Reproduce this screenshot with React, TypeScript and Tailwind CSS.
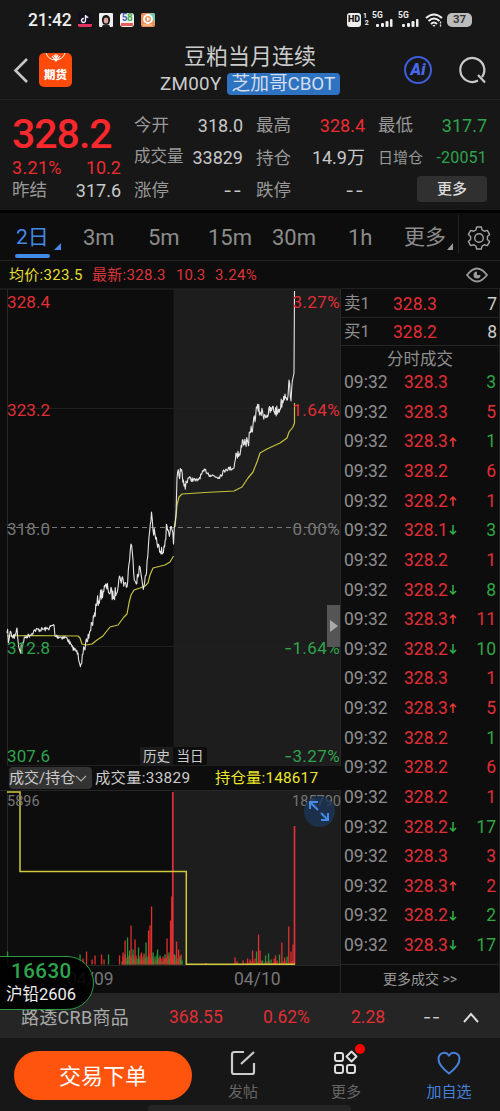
import clsx from 'clsx';

type Point = [number, number];

const trades: [string, string, number, string][] = [
    ['328.3', '', 3, 'g'],
    ['328.3', '', 5, 'r'],
    ['328.3', 'up', 1, 'g'],
    ['328.2', '', 6, 'r'],
    ['328.2', 'up', 1, 'r'],
    ['328.1', 'down', 3, 'g'],
    ['328.2', '', 1, 'r'],
    ['328.2', 'down', 8, 'g'],
    ['328.3', 'up', 11, 'r'],
    ['328.2', 'down', 10, 'g'],
    ['328.3', '', 1, 'r'],
    ['328.3', 'up', 5, 'r'],
    ['328.2', '', 1, 'g'],
    ['328.2', '', 6, 'r'],
    ['328.2', '', 1, 'r'],
    ['328.2', 'down', 17, 'g'],
    ['328.3', '', 3, 'r'],
    ['328.3', 'up', 2, 'r'],
    ['328.2', 'down', 2, 'g'],
    ['328.3', 'down', 17, 'g'],
];

const pricePoints: Point[] = [
    [7, 633], [9, 640], [11, 632], [13, 638], [15, 634], [17, 628], [18, 641], [20, 651], [23, 643], [25, 637], [30, 635], [35, 630],
    [47, 629], [54, 625], [55, 636], [67, 638], [72, 647], [78, 653], [81, 664], [83, 654], [85, 650], [87, 642],
    [90, 631], [92, 623], [94, 617], [97, 603], [100, 597], [105, 587], [108, 589], [114, 597], [120, 577], [125, 583],
    [127, 587], [129, 564], [131, 544], [133, 560], [135, 581], [138, 577], [140, 567], [142, 580], [144, 586], [146.5, 573], [149, 537],
    [151.5, 512], [153, 530], [157, 543], [161, 554], [164, 546], [167, 526], [170, 533], [172, 530], [173.5, 544],
    [175, 523], [176, 515], [177, 478], [181, 471], [184, 486], [188, 478], [197, 481], [205, 470], [210, 475],
    [219, 477], [226, 469], [234, 468], [236, 453], [240, 455], [243, 440], [248, 443], [253, 425], [257, 408],
    [260, 412], [267, 415], [272, 409], [278, 412], [285, 394], [288, 396], [289, 380], [291, 401], [293, 378], [294, 373], [294.5, 291],
];

const avgLeft: Point[] = [
    [7, 636], [30, 635.5], [78, 636], [80, 638], [82, 644], [86, 645], [92, 644], [97, 640], [103, 636], [106, 632], [110, 627],
    [118, 625], [124, 617], [127, 614], [129, 603], [131, 595], [134, 590], [140, 588], [145, 586], [148, 583], [150, 575],
    [153, 568], [165, 565], [170, 562], [173.5, 556],
];

const avgRight: Point[] = [
    [175, 527], [177, 505], [179, 497], [182, 494], [205, 492.5], [234, 491], [242, 487], [248, 478], [253, 472],
    [257, 462], [260, 453], [267, 449], [280, 443], [287, 438], [289, 432], [293, 427], [294.5, 423], [294.5, 403],
];

// x, height, colour
const volumeBars: [number, number, string][] = [
    [7.5, 13, 'g'], [80, 10, 'g'], [83, 6, 'r'], [86.5, 13, 'r'], [92, 5, 'r'], [95, 9, 'r'], [101.5, 10, 'r'],
    [104, 5, 'r'], [108.5, 10, 'g'], [119.5, 9, 'r'], [123, 12, 'r'], [125, 24, 'r'], [127.5, 27, 'g'], [129.5, 14, 'g'],
    [131, 39, 'r'], [133, 15, 'g'], [135, 25, 'r'], [138.5, 17, 'g'], [141.5, 12, 'r'], [144, 11, 'r'], [146, 22, 'g'],
    [148.5, 34, 'r'], [150, 39, 'r'], [151.5, 58, 'r'], [153, 12, 'g'], [157.5, 15, 'g'], [160, 7, 'r'], [164, 6, 'r'],
    [167, 26, 'r'], [169, 12, 'g'], [170.5, 44, 'r'], [171.7, 68, 'r'], [174.5, 10, 'g'], [176.5, 23, 'r'],
    [178.5, 15, 'r'], [180.5, 8, 'g'], [182, 4, 'g'], [206, 1.5, 'r'], [235, 7, 'r'], [237, 3, 'r'], [243, 4, 'r'],
    [247.5, 6, 'r'], [250, 5, 'r'], [252.5, 14, 'r'], [255, 6, 'r'], [256.5, 13, 'g'], [258.5, 30, 'r'], [260, 14, 'r'],
    [262.5, 4, 'g'], [265.5, 9, 'g'], [268.5, 11, 'g'], [271, 5, 'g'], [274, 6, 'r'], [275.5, 9, 'r'], [279.5, 10, 'g'],
    [281.8, 22, 'r'], [284.5, 7, 'r'], [287, 8, 'g'], [288.7, 38, 'r'], [291, 13, 'r'], [293, 20, 'r'],
];

const toPoints = (pts: Point[]) => pts.map((p) => p.join(',')).join(' ');

// small repeatable ticks between the main price points
function withTicks(pts: Point[]) {
    const out: Point[] = [];
    let seed = 7;
    pts.forEach(([x, y], i) => {
        out.push([x, y]);
        const next = pts[i + 1];
        if (!next || x > 293) return;
        const steps = Math.floor((next[0] - x) / 0.6);
        const calm = (x > 20 && x < 78) || (x > 185 && x < 235);
        for (let s = 1; s < steps; s++) {
            seed = (seed * 16807) % 2147483647;
            const amp = calm ? 4.5 : 12;
            out.push([x + ((next[0] - x) * s) / steps, y + ((next[1] - y) * s) / steps + (seed / 2147483647 - 0.5) * amp]);
        }
    });
    return out;
}

// low activity that fills the space under the tall bars
const fillBars: [number, number, string][] = Array.from({ length: 60 }, (_, i) => [
    122 + i,
    3 + ((i * 37) % 8),
    (i * 7) % 5 < 2 ? 'g' : 'r',
]);
const lowBars: [number, number, string][] = Array.from({ length: 24 }, (_, i) => [247 + i * 2, 1 + ((i * 5) % 4), 'r']);

function Bars({ data }: { data: [number, number, string][] }) {
    return (
        <>
            {data.map(([x, h, c], i) => (
                <rect key={i} x={x - 0.6} y={964.5 - h} width="1.3" height={h} fill={c === 'g' ? '#2b9438' : '#e0302e'} />
            ))}
        </>
    );
}

function Signal() {
    return (
        <div className="relative h-4 w-[21px]">
            <span className="absolute -top-[1px] left-0 text-[8.5px] leading-[9px] font-bold">5G</span>
            <svg className="absolute inset-0" width="21" height="16" fill="#eee">
                <rect x="4" y="12" width="3" height="3" rx="1" />
                <rect x="9" y="11" width="3" height="4" rx="1" />
                <rect x="13.5" y="9" width="3" height="6" rx="1" />
                <rect x="18" y="7" width="2.5" height="8" rx="1" />
            </svg>
        </div>
    );
}

function StatusBar() {
    return (
        <div className="flex h-10 items-center pl-7 text-[#eee]">
            <span className="w-[50px] text-[17.5px] font-medium tracking-[-0.2px]">21:42</span>
            <div className="flex gap-[7px]">
                <svg width="14" height="14">
                    <rect width="14" height="14" rx="2" fill="#15101b" />
                    <path d="M7.5 2v5.5a2 2 0 1 1-1.6-2M7.5 2.3c.5 1.4 1.4 2 2.8 2.2" fill="none" stroke="#eef" strokeWidth="1.4" />
                    <path d="M0 11h14v1.5q0 1.5-2 1.5H2q-2 0-2-1.5z" fill="#e33260" />
                </svg>
                <svg width="14" height="14">
                    <rect width="14" height="14" rx="1" fill="#eee" />
                    <path d="M3 8c-1-8 9-8 8 0l-1 3H4z" fill="#171717" />
                    <ellipse cx="7" cy="7.5" rx="2.3" ry="3" fill="#dca59a" />
                    <path d="M3 14c0-4 8-4 8 0z" fill="#222" />
                </svg>
                <div className="h-[14px] w-[14px] overflow-hidden rounded-[3px] bg-[#f5f5f2] text-center text-[10px] leading-[10px] font-bold tracking-[-0.5px]">
                    <span className="text-[#3567c7]">5</span>
                    <span className="text-[#49a842]">8</span>
                    <div className="mx-px h-[3px] bg-[#e95c59]" />
                </div>
                <svg width="14" height="14">
                    <rect width="14" height="14" rx="2" fill="#ec915b" />
                    <path d="M8 0h4q2 0 2 2v8z" fill="#75c8b1" />
                    <circle cx="7" cy="6" r="4" fill="#e99e6b" stroke="#fff" strokeWidth="1.8" />
                    <path d="M6 4l3 2-3 2z" fill="#fff" />
                    <path d="M2 12h9" stroke="#ffd0a4" />
                </svg>
            </div>
            <div className="ml-auto flex items-center pr-[28px]">
                <span className="flex h-[14px] w-[14px] items-center justify-center rounded-[3px] bg-[#eee] text-[9px] font-black text-[#171717]">HD</span>
                <span className="ml-[2px] w-[9px] text-[7px] leading-[7px] font-bold">1<br />&nbsp;2</span>
                <Signal />
                <div className="w-[5px]" />
                <Signal />
                <svg className="ml-[6px]" width="18" height="15" viewBox="0 0 18 15" fill="none" stroke="#eee" strokeWidth="2">
                    <path d="M1 5q8-7 16 0M3.5 8q5.5-5 11 0M6 11q3-3 6 0" />
                    <path d="M7.5 12h3L9 14z" fill="#eee" stroke="none" />
                    <path d="M15.5 8v6" stroke="#171717" strokeWidth="3" />
                    <path d="M15.5 8.5v6" strokeWidth="1.3" strokeDasharray="2 1" />
                </svg>
                <span className="ml-1 flex h-[14px] w-[25px] items-center justify-center rounded-[5px] bg-[#bdbdbd] text-[11.5px] font-semibold text-[#333]">37</span>
            </div>
        </div>
    );
}

function Header() {
    return (
        <header className="relative flex h-[60px] items-center border-b border-[#222]">
            <svg className="ml-[12px]" width="18" height="28" fill="none" stroke="#c6c6c6" strokeWidth="2.6">
                <path d="M15 3L3.500 14.500 15 26" />
            </svg>
            <div className="relative ml-[9px] h-[34px] w-[33px] overflow-hidden rounded-[5px] bg-[#fe4b0b] text-white">
                <svg width="33" height="17" fill="none" stroke="#fff" strokeWidth="1">
                    <path d="M7 0a10 10 0 0 0 19 0" />
                    <path d="M13 3l4 5 4-5M15 2l2 4 2-4M17 1v7" strokeWidth="1.2" />
                </svg>
                <span className="absolute top-[15px] left-[5px] text-[11.500px] leading-[14px] font-black">期货</span>
            </div>
            <div className="absolute top-0 left-[140px] flex h-full w-[220px] flex-col items-center text-[#ccc]">
                <h1 className="mt-[3px] text-[22px] leading-[28px]">豆粕当月连续</h1>
                <div className="mt-[2px] flex items-center gap-[5px] text-[18.8px] leading-[22px]">
                    <span className="tracking-[0.3px]">ZM00Y</span>
                    <span className="rounded bg-[#2e72c2] px-[5px] tracking-[-0.1px] whitespace-nowrap text-[#d3ddeb]">芝加哥CBOT</span>
                </div>
            </div>
            <span className="ml-auto flex h-7 w-7 items-center justify-center rounded-full border-2 border-[#3e5ddd] text-[16px] font-black text-[#4669f0] italic">Ai</span>
            <svg className="mr-[12px] ml-[26px]" width="30" height="30" fill="none" stroke="#c9c9c9" strokeWidth="2.2">
                <path d="M20 25.500A12 12 0 1 1 24 22M20 20l7 7.500" />
            </svg>
        </header>
    );
}

function Stat({ label, value, tone = 'text-[#c8c8c8]', small }: { label: string; value: string; tone?: string; small?: boolean }) {
    return (
        <div className="flex h-[32.5px] items-center justify-between whitespace-nowrap">
            <span className={clsx('text-[#999]', small ? 'text-[15px]' : label.length > 2 ? 'text-[16.5px]' : 'text-[17.5px]')}>{label}</span>
            <span className={clsx(tone, small ? 'text-[16px] tracking-[0.2px]' : 'text-[18px]', value === '--' && "font-[Inter] tracking-[1.5px]")}>{value}</span>
        </div>
    );
}

function Quote() {
    return (
        <section className="flex h-[113px] gap-[13px] border-b-[3px] border-black pt-[9px] pr-[13px] pl-3">
            <div className="w-[109px]">
                <div className="h-[50px] text-[41px] leading-[51px] font-medium tracking-[-1px] text-[#f9282c]">328.2</div>
                <div className="flex h-[16px] items-center justify-between text-[18px] text-[#ed2b31]">
                    <span className="tracking-[0.3px]">3.21%</span>
                    <span>10.2</span>
                </div>
                <div className="-mt-[1px]">
                    <Stat label="昨结" value="317.6" />
                </div>
            </div>
            <div className="w-[109px]">
                <Stat label="今开" value="318.0" />
                <Stat label="成交量" value="33829" />
                <Stat label="涨停" value="--" />
            </div>
            <div className="w-[109px]">
                <Stat label="最高" value="328.4" tone="text-[#ed2b31]" />
                <Stat label="持仓" value="14.9万" />
                <Stat label="跌停" value="--" />
            </div>
            <div className="w-[109px]">
                <Stat label="最低" value="317.7" tone="text-[#2fa44d]" />
                <Stat label="日增仓" value="-20051" tone="text-[#2fa44d]" small />
                <button className="mt-[2px] ml-[39px] block h-[26px] w-[70px] rounded-[4px] bg-[#303030] text-[15px] font-medium text-[#ddd]">更多</button>
            </div>
        </section>
    );
}

function Tabs() {
    return (
        <nav className="flex h-[48px] items-center border-b border-[#252525] pt-[2px] text-[22px] text-[#8c8c8c]">
            <div className="relative ml-[15px] w-[68px] text-[21px] text-[#4389e8]">
                <span className="ml-px">2日</span>
                <i className="absolute top-[32px] left-0 h-1 w-[35px] rounded-full bg-[#4389e8]" />
                <svg className="absolute top-[21px] left-[39px]" width="7" height="7">
                    <path d="M7 0v7H0z" fill="#4389e8" />
                </svg>
            </div>
            <span className="w-[65px]">3m</span>
            <span className="w-[60px]">5m</span>
            <span className="w-[64px]">15m</span>
            <span className="w-[76px]">30m</span>
            <span className="w-[56px]">1h</span>
            <div className="relative w-[54px] text-[21px]">
                更多
                <svg className="absolute top-[21px] left-[43px]" width="6" height="7">
                    <path d="M6 0v7H0z" fill="#999" />
                </svg>
            </div>
            <i className="h-[38px] w-px self-start bg-[#222]" />
            <svg className="ml-[8px]" width="24" height="24" viewBox="0 0 24 24" fill="none" stroke="#a3a3a3" strokeWidth="1.4" strokeLinejoin="round">
                <path d="M9.700 1h4.600l.8 3 2.200 1.200 3-.8 2.300 4-2.200 2.200v2.800l2.200 2.200-2.300 4-3-.8-2.200 1.200-.8 3H9.700l-.8-3-2.200-1.200-3 .8-2.300-4 2.200-2.200v-2.800L1.400 8.400l2.300-4 3 .8L8.900 4z" />
                <circle cx="12" cy="12" r="4.300" />
            </svg>
        </nav>
    );
}

function PriceChart() {
    return (
        <div className="relative h-[478px] text-[17px] leading-5">
            <svg className="block" width="341" height="478" viewBox="0 288 341 478" fill="none">
                <path d="M173.500 289H340V766H173.500z" fill="#1d1d1d" />
                <path d="M7.500 289V766M340.500 289V766M0 289h340" stroke="#282828" />
                <path d="M7 408.500H340M7 646.500H340M7 765.500H340" stroke="#202020" />
                <path d="M7 527.500H340" stroke="#777" strokeDasharray="5 4" />
                <polyline points={toPoints(avgLeft)} stroke="#c5c23f" strokeWidth="1.2" strokeLinejoin="round" />
                <polyline points={toPoints(avgRight)} stroke="#c5c23f" strokeWidth="1.2" strokeLinejoin="round" />
                <polyline points={toPoints(withTicks(pricePoints))} stroke="#e5e5e5" strokeWidth="1.1" strokeLinejoin="round" />
            </svg>
            <div className="absolute inset-y-0 left-[7px] tracking-[0.1px]">
                <span className="absolute top-[4px] text-[#e12e35]">328.4</span>
                <span className="absolute top-[112px] text-[#e12e35]">323.2</span>
                <span className="absolute top-[231px] text-[#777]">318.0</span>
                <span className="absolute top-[350px] text-[#2fa44d]">312.8</span>
                <span className="absolute top-[458px] text-[#2fa44d]">307.6</span>
            </div>
            <div className="absolute inset-y-0 right-[1px] whitespace-nowrap tracking-[0.4px]">
                <span className="absolute top-[4px] right-0 text-[#e12e35]">3.27%</span>
                <span className="absolute top-[112px] right-0 text-[#e12e35]">1.64%</span>
                <span className="absolute top-[231px] right-0 text-[#777]">0.00%</span>
                <span className="absolute top-[350px] right-0 text-[#2fa44d]"><i className="font-[Inter] not-italic">-</i>1.64%</span>
                <span className="absolute top-[458px] right-0 text-[#2fa44d]"><i className="font-[Inter] not-italic">-</i>3.27%</span>
            </div>
            <div className="absolute top-[459px] left-[140px] flex text-[13.5px] leading-[18px] text-[#ccc]">
                <span className="w-[33px] bg-[#1c1c1c] text-center">历史</span>
                <span className="w-[34px] bg-[#0d0d0d] text-center">当日</span>
            </div>
        </div>
    );
}

function VolumeChart() {
    return (
        <div className="relative h-[175px] text-[14.5px] leading-4 text-[#777]">
            <svg className="block" width="341" height="175" viewBox="0 790 341 175" fill="none">
                <path d="M173.500 791H340V965H173.500z" fill="#1d1d1d" />
                <path d="M0 790.500H340M7.500 790V965M340.500 790V965" stroke="#262626" />
                <Bars data={fillBars} />
                <Bars data={lowBars} />
                <Bars data={volumeBars} />
                <path d="M172.800 792V964.500M294.500 826V964.500" stroke="#e3303d" strokeWidth="1.7" />
                <path d="M7 792H20V871.500H186.300V964.300H295" stroke="#d0c83a" strokeWidth="1.5" />
            </svg>
            <span className="absolute top-[4px] left-[7px]">5896</span>
            <span className="absolute top-[4px] right-0">185790</span>
            <svg className="absolute top-[6px] left-[304px]" width="31" height="31" fill="none" stroke="#448be8" strokeWidth="2">
                <circle cx="15.500" cy="15.500" r="15.500" fill="#1d3657" stroke="none" opacity=".8" />
                <path d="M6 6l8 8M6 13V6h8M17 17l7 7M17 24h7v-7" />
            </svg>
        </div>
    );
}

function ChartColumn() {
    return (
        <div className="w-[341px]">
            <PriceChart />
            <div className="flex h-6 items-center pl-[9px] text-[15.3px] whitespace-nowrap text-[#ccc]">
                <span className="flex h-[22px] w-[83px] items-center rounded-[4px] bg-[#333] text-[15px]">
                    成交/持仓
                    <svg width="12" height="8" fill="none" stroke="#aaa" strokeWidth="1.2">
                        <path d="M1 2l5 5 5-5" />
                    </svg>
                </span>
                <span className="ml-[3px] w-[120px] tracking-[0.3px]">成交量:33829</span>
                <span className="tracking-[0.2px] text-[#ece72c]">持仓量:148617</span>
            </div>
            <VolumeChart />
            <div className="flex h-[28px] border-t border-r border-[#262626] pl-[67px] text-[17.5px] leading-[27px] text-[#777]">
                <span className="w-[167px]">04/09</span>
                <span>04/10</span>
            </div>
        </div>
    );
}

function Direction({ dir }: { dir: string }) {
    if (!dir) return null;
    return (
        <svg width="8" height="12" fill="none" stroke={dir === 'up' ? '#ee3a34' : '#31b442'} strokeWidth="1.5">
            {dir === 'up' ? <path d="M4 11V2M1 5l3-3 3 3" /> : <path d="M4 1v9M1 7l3 3 3-3" />}
        </svg>
    );
}

function Trades() {
    return (
        <aside className="flex w-[159px] flex-col border-t border-r border-[#222] pt-px text-[17.5px] text-[#8e8e8e]">
            {[['卖1', '328.3', '7'], ['买1', '328.2', '8']].map(([label, price, size]) => (
                <div key={label} className="flex h-[28px] items-center border-b border-[#252525] pt-px pr-[2px] pl-[3px]">
                    <span className="w-[49px] text-[16.500px]">{label}</span>
                    <span className="text-[#e12e35]">{price}</span>
                    <span className="ml-auto text-[#ccc]">{size}</span>
                </div>
            ))}
            <div className="h-[21px] pt-px text-center text-[16.500px] leading-[25px]">分时成交</div>
            {trades.map(([price, dir, size, tone], i) => (
                <div key={i} className="flex h-[29.63px] items-center pt-px pr-[3px] pl-[3px]">
                    <span className="w-[60px]">09:32</span>
                    <span className="w-[45px] text-[#e12e35]">{price}</span>
                    <Direction dir={dir} />
                    <span className={clsx('ml-auto', tone === 'g' ? 'text-[#31a643]' : 'text-[#e12e35]')}>{size}</span>
                </div>
            ))}
            <div className="mt-auto h-[29px] border-t border-[#262626] text-center text-[14px] leading-[28px] text-[#999]">更多成交 &gt;&gt;</div>
        </aside>
    );
}

function Footer() {
    return (
        <footer className="relative flex h-[73px] bg-[#171717] text-[14px]">
            <button className="mt-[13px] ml-[14px] h-[49px] w-[178px] rounded-full bg-[#ff540e] pt-px text-[22px] text-white">交易下单</button>
            <div className="mt-[11px] ml-[16px] flex w-[70px] flex-col items-center gap-[4px] text-[#656565]">
                <svg width="28" height="28" fill="none" stroke="#ccc" strokeWidth="2.2">
                    <path d="M15 3H5.500Q3 3 3 5.500V23q0 2 2 2h18q2 0 2-2v-9M12 15L25 3" />
                </svg>
                <span className="text-[15px] leading-[22px]">发帖</span>
            </div>
            <div className="relative mt-[11px] ml-[33px] flex w-[70px] flex-col items-center gap-[4px] text-[#656565]">
                <svg width="28" height="28" fill="none" stroke="#ddd" strokeWidth="2">
                    <rect x="3" y="4" width="8" height="8" rx="2" />
                    <rect x="3" y="16" width="8" height="8" rx="2" />
                    <rect x="15" y="16" width="8" height="8" rx="2" />
                    <path d="M19.500 2.500l5 5-5 5-5-5z" strokeLinejoin="round" />
                </svg>
                <span className="text-[15px] leading-[22px]">更多</span>
                <i className="absolute -top-[5px] left-[44px] h-[10px] w-[10px] rounded-full bg-[#fb0000]" />
            </div>
            <div className="mt-[11px] ml-[33px] flex w-[70px] flex-col items-center gap-[4px] text-[#4682db]">
                <svg width="28" height="28" fill="none" stroke="#4682db" strokeWidth="2">
                    <path d="M14 24.500C8 20 3.500 15.500 3.500 10c0-6 7-8.500 10.500-3.500C17.500 1.500 24.500 4 24.500 10c0 5.500-4.500 10-10.500 14.500z" />
                </svg>
                <span className="text-[15px] leading-[22px]">加自选</span>
            </div>
            <i className="absolute bottom-0 left-[148px] h-[6px] w-[203px] rounded-t bg-[#252525]" />
        </footer>
    );
}

export default function App() {
    return (
        <div className="relative h-[1111px] w-[500px] overflow-hidden bg-[#0d0d0d] font-[Roboto,'Noto_Sans_CJK_SC',sans-serif]">
            <div className="bg-[#171717]">
                <StatusBar />
                <Header />
                <Quote />
            </div>
            <Tabs />
            <div className="flex h-[27px] items-center pt-px pr-3 pl-[9px] text-[15px] text-[#db3437]">
                <span className="w-[83px] tracking-[0.3px] text-[#e5df32]">均价:323.5</span>
                <span className="w-[84px] tracking-[0.3px]">最新:328.3</span>
                <span className="w-[39px]">10.3</span>
                <span className="tracking-[0.4px]">3.24%</span>
                <svg className="ml-auto" width="22" height="16" fill="none" stroke="#999" strokeWidth="1.8">
                    <path d="M1 8q10-13 20 0-10 13-20 0z" />
                    <circle cx="11" cy="8" r="3.500" fill="#999" stroke="none" />
                    <path d="M11 8V4h4v4z" fill="#0d0d0d" stroke="none" />
                </svg>
            </div>
            <div className="relative flex h-[705px]">
                <ChartColumn />
                <Trades />
                <div className="absolute top-[317px] left-[327px] flex h-[42px] w-[13px] items-center justify-center bg-[#555]">
                    <svg width="8" height="12">
                        <path d="M0 0l8 6-8 6z" fill="#aaa" />
                    </svg>
                </div>
            </div>
            <div className="flex h-[45px] items-center bg-[#252525] pt-[3px] pl-[21px] text-[17.5px] text-[#e12e35]">
                <span className="w-[148px] text-[18px] tracking-[0.3px] text-[#aaa]">路透CRB商品</span>
                <span className="w-[94px]">368.55</span>
                <span className="w-[88px]">0.62%</span>
                <span className="w-[72px]">2.28</span>
                <span className="w-[40px] font-[Inter] tracking-[1px] text-[#ccc]">--</span>
                <svg width="16" height="11" fill="none" stroke="#ddd" strokeWidth="2">
                    <path d="M1 10l7-8 7 8" />
                </svg>
            </div>
            <Footer />
            <div className="absolute top-[956px] -left-2 h-[54px] w-[102px] rounded-r-full border border-[#2a9c48] bg-black/90 pl-[13px]">
                <div className="pl-[5px] text-[20.5px] leading-[28px] font-medium tracking-[0.5px] text-[#2fa44d]">16630</div>
                <div className="text-[16.5px] leading-[20px] whitespace-nowrap text-[#eee]">沪铅2606</div>
            </div>
        </div>
    );
}
